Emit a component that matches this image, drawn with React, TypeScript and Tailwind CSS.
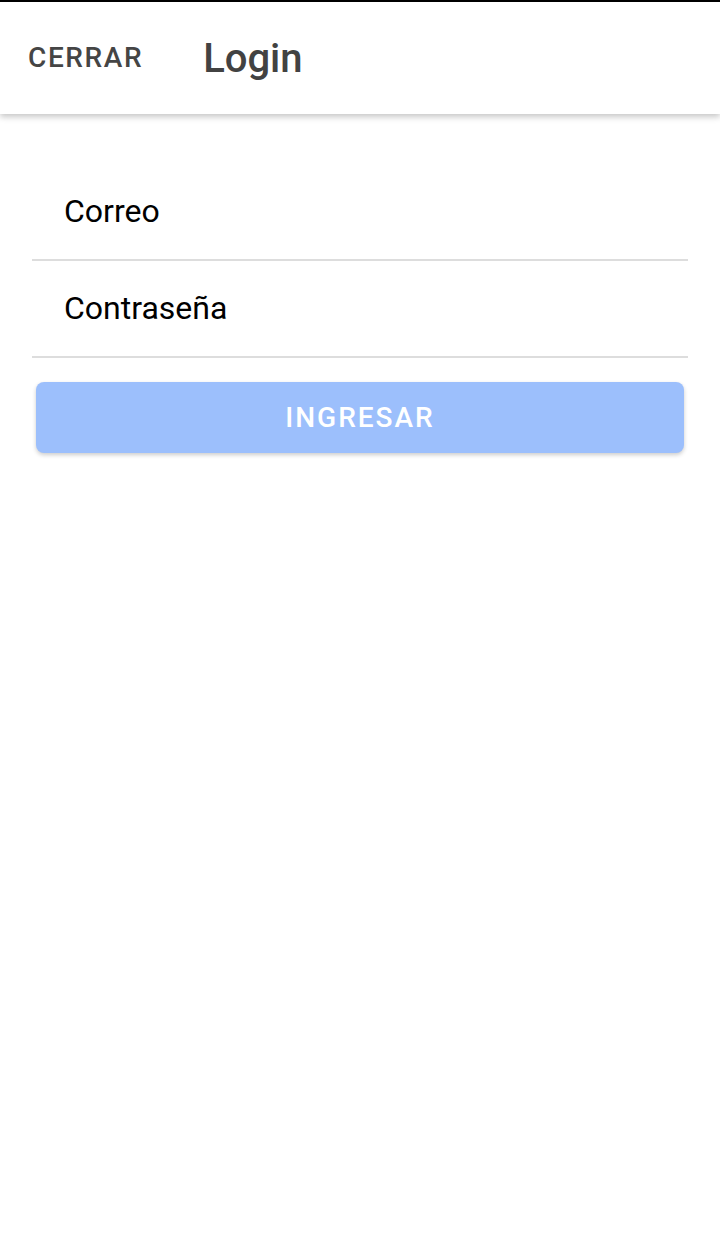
import React from "react";

export default function App() {
  return (
    <div className="min-h-[1233px] bg-white font-['Roboto',sans-serif]">
      <div className="h-[2px] bg-black" />
      <header className="relative z-10 flex h-[112px] items-center bg-white shadow-[0_3px_6px_rgba(0,0,0,0.22)]">
        <button
          type="button"
          className="ml-[28px] text-[28px] font-medium leading-none tracking-[1.6px] text-[#454545]"
        >
          CERRAR
        </button>
        <h1 className="ml-[60px] mt-[2px] text-[40px] font-medium leading-none text-[#424242]">Login</h1>
      </header>

      <main className="px-[32px] pt-[50px]">
        <div className="flex h-[97px] items-center border-b-2 border-[#dddddd] pb-[2px] pl-[32px] text-[32px] text-black">
          Correo
        </div>
        <div className="flex h-[97px] items-center border-b-2 border-[#dddddd] pb-[2px] pl-[32px] text-[32px] text-black">
          Contraseña
        </div>
        <div className="px-[4px] pt-[24px]">
          <button
            type="button"
            className="flex h-[71px] w-full items-center justify-center rounded-[8px] bg-[#9cbffc] text-[28px] font-medium tracking-[2px] text-white shadow-[0_2px_4px_rgba(0,0,0,0.2)]"
          >
            INGRESAR
          </button>
        </div>
      </main>
    </div>
  );
}
